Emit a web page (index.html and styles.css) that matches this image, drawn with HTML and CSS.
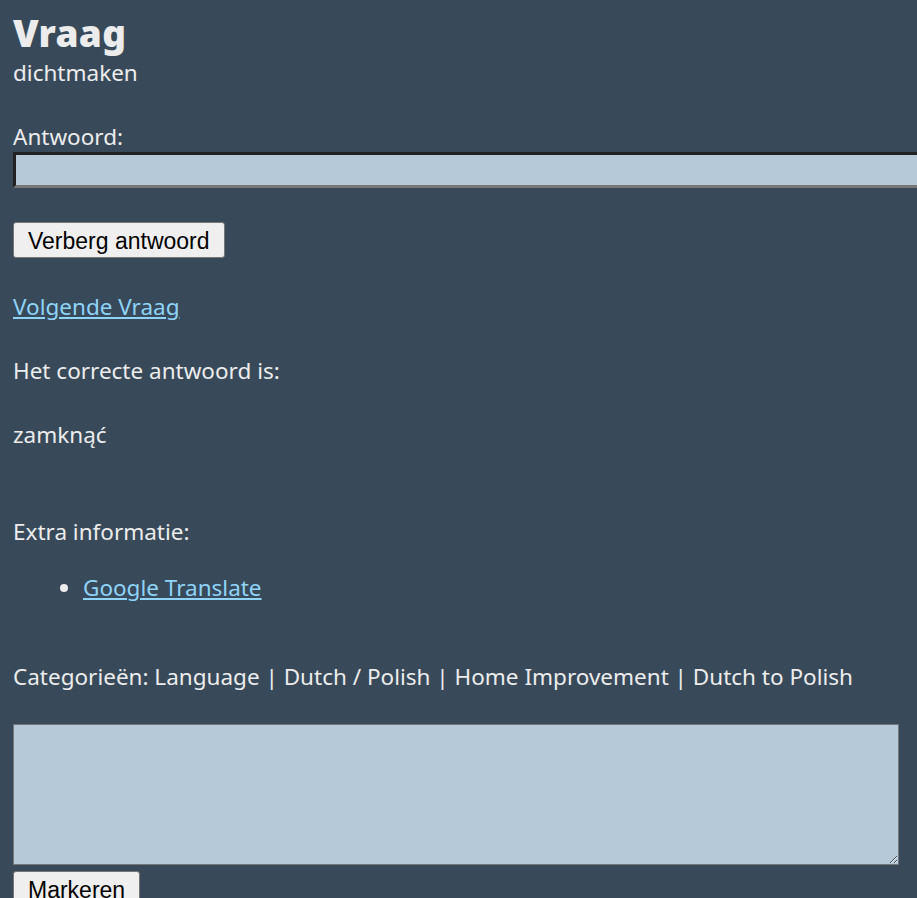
FILE: index.html
```html
<!DOCTYPE html>
<html lang="nl">
<head>
<meta charset="utf-8">
<title>Vraag</title>
<link rel="stylesheet" href="styles.css">
</head>
<body>
<div class="page">
  <h1 class="title">Vraag</h1>
  <div class="question">dichtmaken</div>
  <label class="label" for="answer">Antwoord:</label>
  <input class="answer-input" id="answer" type="text">
  <div class="row"><button class="btn" type="button">Verberg antwoord</button></div>
  <div class="row"><a class="link" href="#">Volgende Vraag</a></div>
  <div class="row">Het correcte antwoord is:</div>
  <div class="row">zamknąć</div>
  <div class="extra">Extra informatie:</div>
  <ul class="info-list">
    <li><a class="link" href="#">Google Translate</a></li>
  </ul>
  <div class="cats">Categorieën: Language | Dutch / Polish | Home Improvement | Dutch to Polish</div>
  <textarea class="notes"></textarea>
  <div><button class="btn btn-mark" type="button">Markeren</button></div>
</div>
</body>
</html>
```

FILE: styles.css
```css
html, body {
  margin: 0;
  padding: 0;
  background: #384a5a;
  overflow: hidden;
}
.page {
  padding: 0 13px;
  color: #ececec;
  font-family: "Noto Sans", "Open Sans", sans-serif;
  font-size: 22.5px;
  line-height: 30px;
}
.title {
  margin: 0;
  padding-top: 8px;
  font-family: "Noto Sans", sans-serif;
  font-weight: 900;
  font-size: 37px;
  line-height: 50px;
  letter-spacing: 0.3px;
  color: #ececec;
}
.question {
  margin: 0;
}
.label {
  display: block;
  margin-top: 34px;
}
.answer-input {
  display: block;
  box-sizing: border-box;
  width: 1000px;
  height: 36px;
  margin: 0;
  background: #b6c9d8;
  border: 3px solid;
  border-color: #222 #777 #777 #222;
  padding: 0 4px;
}
.row {
  margin-top: 34px;
}
.btn {
  font-family: "Liberation Sans", Arial, sans-serif;
  font-size: 23px;
  line-height: 26px;
  height: 36px;
  padding: 2px 14px 0;
  background: #efefef;
  color: #000;
  border: 1px solid #767676;
  border-radius: 3px;
  margin: 0;
}
.row .btn {
  display: block;
}
.link {
  color: #8fd3f7;
  text-decoration: underline;
}
.extra {
  margin-top: 67px;
}
.info-list {
  margin: 26px 0 0 0;
  padding-left: 70px;
}
.cats {
  margin-top: 59px;
}
.notes {
  display: block;
  box-sizing: border-box;
  width: 886px;
  height: 141px;
  margin-top: 32px;
  background: #b6c9d8;
  border: 1px solid #767676;
}
.btn-mark {
  margin-top: 6px;
}
```
